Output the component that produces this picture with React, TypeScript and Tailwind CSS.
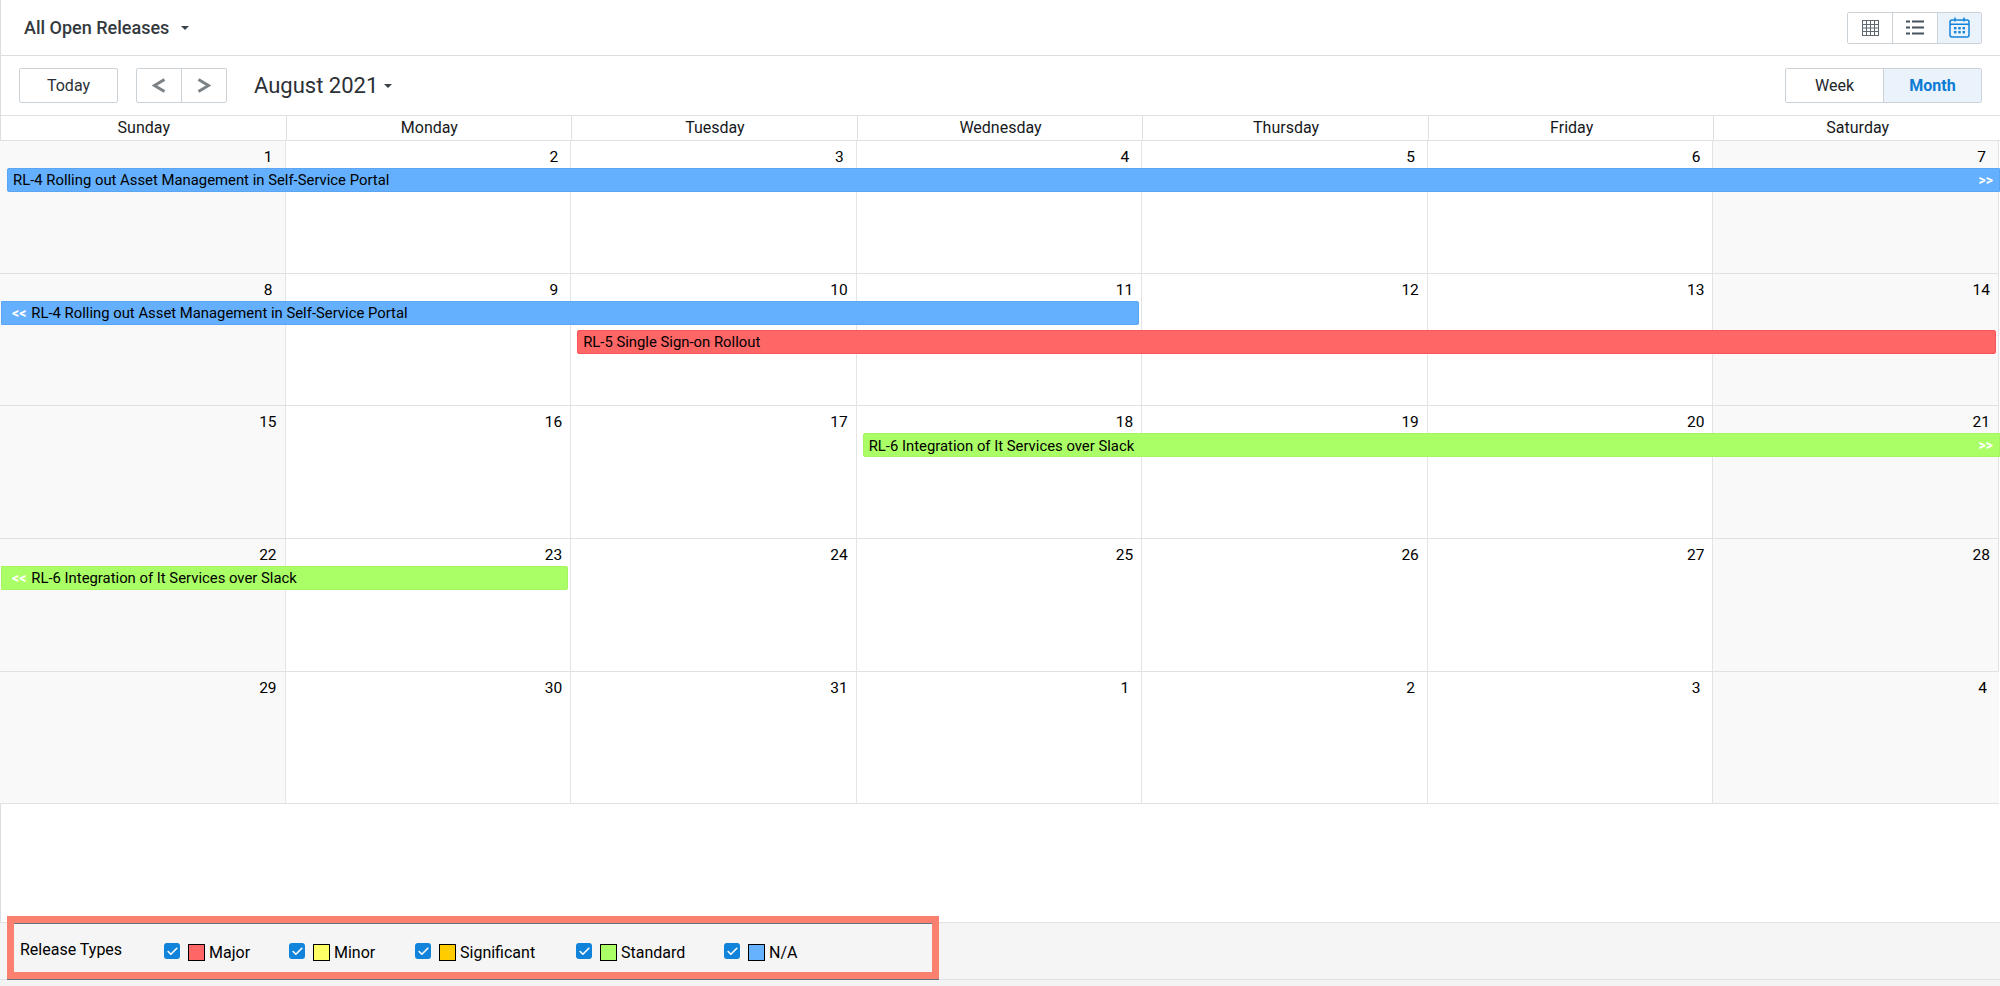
import { Check } from "lucide-react";

const dayNames = ["Sunday", "Monday", "Tuesday", "Wednesday", "Thursday", "Friday", "Saturday"];

const colClass = [
  "col-start-1",
  "col-start-2",
  "col-start-3",
  "col-start-4",
  "col-start-5",
  "col-start-6",
  "col-start-7",
];

type Bar = {
  label: string;
  place: string;
  color: string;
  back?: boolean;
  more?: boolean;
};

const blue = "bg-[#64b0ff] border-[#5aa6f5]";
const red = "bg-[#ff6666] border-[#fb5559]";
const green = "bg-[#aaff66] border-[#a4f560]";

const weeks: { days: number[]; bars: Bar[] }[] = [
  {
    days: [1, 2, 3, 4, 5, 6, 7],
    bars: [
      {
        label: "RL-4 Rolling out Asset Management in Self-Service Portal",
        place: "col-start-1 col-span-7 row-start-2 ml-[7px] -mr-px",
        color: blue + " rounded-l-[2px]",
        more: true,
      },
    ],
  },
  {
    days: [8, 9, 10, 11, 12, 13, 14],
    bars: [
      {
        label: "RL-4 Rolling out Asset Management in Self-Service Portal",
        place: "col-start-1 col-span-4 row-start-2 ml-px mr-[3px]",
        color: blue + " rounded-r-[2px]",
        back: true,
      },
      {
        label: "RL-5 Single Sign-on Rollout",
        place: "col-start-3 col-span-5 row-start-4 ml-[6px] mr-[3px]",
        color: red + " rounded-[2px]",
      },
    ],
  },
  {
    days: [15, 16, 17, 18, 19, 20, 21],
    bars: [
      {
        label: "RL-6 Integration of It Services over Slack",
        place: "col-start-4 col-span-4 row-start-2 ml-[6px] -mr-px",
        color: green + " rounded-l-[2px]",
        more: true,
      },
    ],
  },
  {
    days: [22, 23, 24, 25, 26, 27, 28],
    bars: [
      {
        label: "RL-6 Integration of It Services over Slack",
        place: "col-start-1 col-span-2 row-start-2 ml-px mr-[3px]",
        color: green + " rounded-r-[2px]",
        back: true,
      },
    ],
  },
  { days: [29, 30, 31, 1, 2, 3, 4], bars: [] },
];

const legend = [
  { name: "Major", color: "bg-[#ff6666]", width: "w-[125px]" },
  { name: "Minor", color: "bg-[#ffff66]", width: "w-[126px]" },
  { name: "Significant", color: "bg-[#ffcc00]", width: "w-[161px]" },
  { name: "Standard", color: "bg-[#aaff66]", width: "w-[148px]" },
  { name: "N/A", color: "bg-[#66b2ff]", width: "w-auto" },
];

function GridIcon() {
  return (
    <svg width="17" height="16" viewBox="0 0 17 16" fill="none" stroke="#5d6870" strokeWidth="1">
      <rect x="0.5" y="0.5" width="16" height="15" />
      <path d="M4.5 0v16M8.5 0v16M12.5 0v16M0 4.5h17M0 8h17M0 11.5h17" />
    </svg>
  );
}

function ListIcon() {
  return (
    <svg width="18" height="15" viewBox="0 0 18 15" fill="#47535c">
      <rect x="0" y="0.5" width="4" height="2" />
      <rect x="6" y="0.5" width="12" height="2" />
      <rect x="0" y="6.5" width="4" height="2" />
      <rect x="6" y="6.5" width="12" height="2" />
      <rect x="0" y="12.5" width="4" height="2" />
      <rect x="6" y="12.5" width="12" height="2" />
    </svg>
  );
}

function CalendarIcon() {
  return (
    <svg width="21" height="21" viewBox="0 0 21 21" fill="none">
      <rect x="1" y="3" width="19" height="17" rx="2" stroke="#1283da" strokeWidth="1.5" />
      <path d="M1 7.2h19" stroke="#1283da" strokeWidth="1.5" />
      <path d="M6 0.5v4M15 0.5v4" stroke="#1283da" strokeWidth="1.5" />
      <g fill="#1283da">
        <rect x="5" y="10" width="2.4" height="2.4" />
        <rect x="9.3" y="10" width="2.4" height="2.4" />
        <rect x="13.6" y="10" width="2.4" height="2.4" />
        <rect x="5" y="14" width="2.4" height="2.4" />
        <rect x="9.3" y="14" width="2.4" height="2.4" />
        <rect x="13.6" y="14" width="2.4" height="2.4" />
      </g>
    </svg>
  );
}

function Caret({ className }: { className: string }) {
  return <span className={"inline-block border-x-[4.5px] border-t-[4.5px] border-x-transparent border-t-[#3a4249] " + className} />;
}

export default function App() {
  return (
    <div className="relative flex h-[986px] w-[2000px] flex-col overflow-hidden bg-white font-[Roboto,sans-serif] text-[#16191c]">
      <div className="flex flex-1 flex-col border-l border-[#dcdfe1]">
        {/* title bar */}
        <div className="flex h-[56px] shrink-0 items-center justify-between border-b border-[#dcdfe1] pl-[23px] pr-[18px]">
          <div className="flex items-center">
            <span className="text-[18px] font-medium text-[#33393e]">All Open Releases</span>
            <Caret className="ml-[12px]" />
          </div>
          <div className="flex h-[32px] overflow-hidden rounded-[2px] border border-[#ccd3d8]">
            <button className="flex w-[45px] items-center justify-center border-r border-[#ccd3d8]">
              <GridIcon />
            </button>
            <button className="flex w-[45px] items-center justify-center border-r border-[#ccd3d8]">
              <ListIcon />
            </button>
            <button className="flex w-[43px] items-center justify-center bg-[#eaf3fb]">
              <CalendarIcon />
            </button>
          </div>
        </div>

        {/* toolbar */}
        <div className="flex h-[59px] shrink-0 items-center justify-between pl-[18px] pr-[18px]">
          <div className="flex items-center">
            <button className="h-[35px] w-[99px] rounded-[2px] border border-[#ccd3d8] text-[16px] text-[#2b3136]">Today</button>
            <div className="ml-[18px] flex h-[35px] w-[91px] rounded-[2px] border border-[#ccd3d8]">
              <button className="flex w-[45px] items-center justify-center border-r border-[#ccd3d8]">
                <svg width="14" height="15" viewBox="0 0 14 15" fill="none" stroke="#7d8286" strokeWidth="3">
                  <path d="M12.5 1.5 2.5 7.5l10 6" />
                </svg>
              </button>
              <button className="flex flex-1 items-center justify-center">
                <svg width="14" height="15" viewBox="0 0 14 15" fill="none" stroke="#7d8286" strokeWidth="3">
                  <path d="M1.5 1.5 11.5 7.5l-10 6" />
                </svg>
              </button>
            </div>
            <span className="ml-[27px] text-[22px] text-[#2b3136]">August 2021</span>
            <Caret className="ml-[6px]" />
          </div>
          <div className="flex h-[35px] rounded-[2px] border border-[#ccd3d8] text-[16px]">
            <button className="w-[98px] border-r border-[#ccd3d8] text-[#22272b]">Week</button>
            <button className="w-[97px] bg-[#eaf3fb] font-bold text-[#0b7bd4]">Month</button>
          </div>
        </div>

        {/* calendar head */}
        <div className="grid h-[26px] shrink-0 grid-cols-7 border-y border-[#dfe1e2]">
          {dayNames.map((d) => (
            <div key={d} className="flex items-center justify-center border-r border-[#dfe1e2] pl-px text-[16px] last:border-r-0">
              {d}
            </div>
          ))}
        </div>

        {/* calendar body */}
        {weeks.map((week, w) => (
          <div
            key={w}
            className="-ml-px mr-px grid h-[132.7px] shrink-0 grid-cols-7 grid-rows-[27px_24px_5px_24px_1fr] border-b border-[#dfe1e2]"
          >
            {week.days.map((n, i) => (
              <div
                key={i}
                className={
                  colClass[i] +
                  " row-start-1 row-end-6 border-r border-[#e3e4e5] pt-[6px] text-right text-[15.5px] leading-[20px] text-black last:border-r-0 " +
                  (n < 10 ? "pr-[12px] " : "pr-[8px] ") +
                  (i === 0 || i === 6 ? "bg-[#f9f9f9]" : "bg-white")
                }
              >
                {n}
              </div>
            ))}
            {week.bars.map((bar) => (
              <div
                key={bar.label + bar.place}
                className={bar.place + " " + bar.color + " flex items-center border pl-[5px] pr-[6px] pt-[1px] text-[14.85px] text-black"}
              >
                {bar.back && <span className="ml-[5px] mr-[5px] text-[14px] font-bold text-white">&lt;&lt;</span>}
                <span className="whitespace-nowrap">{bar.label}</span>
                {bar.more && <span className="ml-auto text-[14px] font-bold text-white">&gt;&gt;</span>}
              </div>
            ))}
          </div>
        ))}
      </div>

      {/* legend footer */}
      <div className="relative flex h-[58px] shrink-0 items-center border-y border-[#e0e2e3] bg-[#f5f5f5] pl-[20px] text-[16px] text-black">
        <span className="w-[144px] -translate-y-px">Release Types</span>
        {legend.map((item) => (
          <label key={item.name} className={item.width + " flex items-center"}>
            <span className="flex h-[16px] w-[16px] items-center justify-center rounded-[3px] bg-[#1283da]">
              <Check size={13} color="white" strokeWidth={3} />
            </span>
            <span className="ml-[8px] h-[17px] w-[17px] translate-y-px border border-black">
              <span className={"block h-full w-full " + item.color} />
            </span>
            <span className="ml-[4px] translate-y-[2px]">{item.name}</span>
          </label>
        ))}
        <div className="pointer-events-none absolute left-[7px] top-[-7px] h-[63px] w-[932px] border-[7px] border-[#fc8070] shadow-[inset_0_1px_0_#66737a,0_1px_0_#66737a]" />
      </div>
      <div className="h-[6px] shrink-0 bg-[#f3f3f3]" />
    </div>
  );
}
